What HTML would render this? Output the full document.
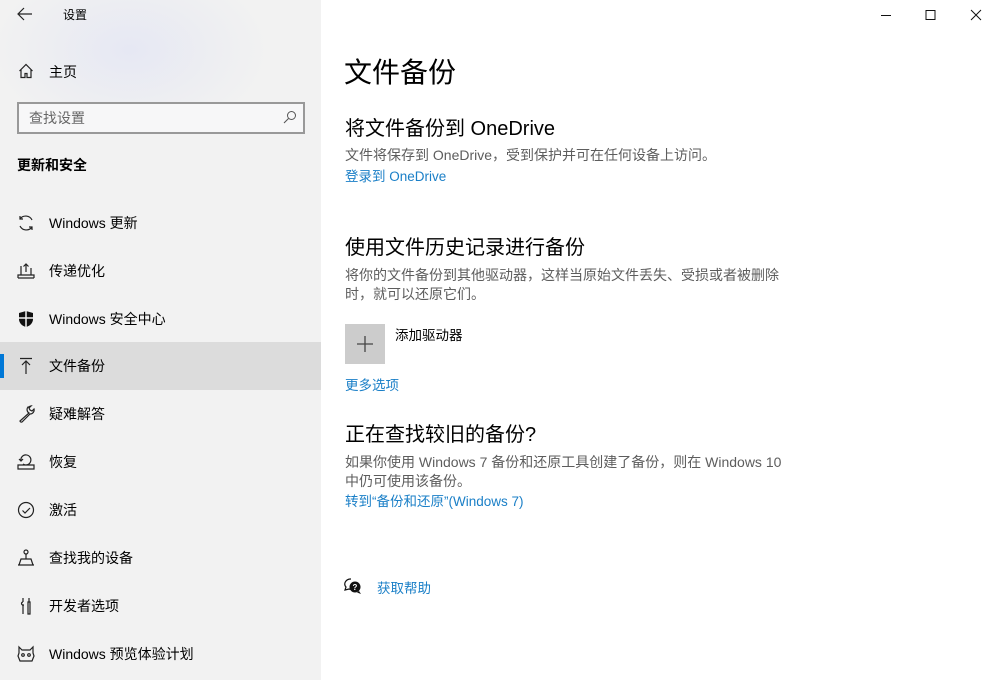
<!DOCTYPE html>
<html><head><meta charset="utf-8"><style>
*{margin:0;padding:0;box-sizing:border-box}
body{width:996px;height:680px;overflow:hidden;background:#fff;font-family:"Liberation Sans","Noto Sans CJK SC",sans-serif;color:#000;position:relative}
.side{position:absolute;left:0;top:0;width:321px;height:680px;background:radial-gradient(ellipse 140px 90px at 130px 50px,#e6e8f3,rgba(242,242,242,0) 100%),#f2f2f2}
.t{position:absolute;white-space:nowrap}
.item{position:absolute;left:0;width:321px;height:48px;font-size:14px;line-height:48px}
.item .lbl{position:absolute;left:49px;top:0}
.item svg{position:absolute;left:17px;top:15px}
.sel{background:#dcdcdc}
.sel:before{content:"";position:absolute;left:0;top:12px;width:4px;height:24px;background:#0078d7}
.p{font-size:14px;color:#5d5d5d;line-height:19px}
.a{font-size:13.5px;color:#1a7fc7}
h2{font-weight:normal;font-size:20px}
</style></head><body>
<div class="side">
<svg class="t" style="left:17px;top:7px" width="16" height="14" viewBox="0 0 16 14"><path d="M15 7H2M7 1L1 7l6 6" fill="none" stroke="#222" stroke-width="1.2"/></svg>
<div class="t" style="left:63px;top:6px;font-size:12px">设置</div>
<svg class="t" style="left:18px;top:63px" width="16" height="16" viewBox="0 0 16 16"><path d="M1.5 8L8 1.5 14.5 8M3 6.5V14.5h4v-4h2v4h4V6.5" fill="none" stroke="#222" stroke-width="1.2"/></svg>
<div class="t" style="left:49px;top:62px;font-size:14px">主页</div>
<div class="t" style="left:17px;top:102px;width:288px;height:32px;border:2px solid #999;background:#f7f7f8"></div>
<div class="t" style="left:29px;top:108px;font-size:14px;color:#666">查找设置</div>
<svg class="t" style="left:283px;top:110px" width="14" height="14" viewBox="0 0 14 14"><circle cx="8.5" cy="5.5" r="4" fill="none" stroke="#555" stroke-width="1"/><path d="M5.5 8.5L1 13" stroke="#555" stroke-width="1.1"/></svg>
<div class="t" style="left:17px;top:155px;font-size:14px;font-weight:bold">更新和安全</div>

<div class="item" style="top:199px"><svg width="18" height="18" viewBox="0 0 18 18" fill="none" stroke="#222" stroke-width="1.2"><path d="M15 6A7 7 0 0 0 3 5M3 2v3h3M3 12a7 7 0 0 0 12 1M15 16v-3h-3"/></svg><span class="lbl">Windows 更新</span></div>
<div class="item" style="top:247px"><svg width="18" height="18" viewBox="0 0 18 18" fill="none" stroke="#222" stroke-width="1.2"><path d="M1 16h16M1 16V13h16v3M4 13V4M9 10V2M6.5 4.5L9 2l2.5 2.5M14 13V6"/></svg><span class="lbl">传递优化</span></div>
<div class="item" style="top:295px"><svg width="18" height="18" viewBox="0 0 18 18"><path d="M9 1L2 3v6c0 4 3 7 7 8 4-1 7-4 7-8V3z" fill="#111"/><path d="M9 1v17M2 8h14" stroke="#f2f2f2" stroke-width="1.5"/></svg><span class="lbl">Windows 安全中心</span></div>
<div class="item sel" style="top:342px"><svg width="18" height="18" viewBox="0 0 18 18" fill="none" stroke="#222" stroke-width="1.2"><path d="M3 1.5h12M9 17V4M5 8l4-4 4 4"/></svg><span class="lbl">文件备份</span></div>
<div class="item" style="top:390px"><svg width="18" height="18" viewBox="0 0 18 18" fill="none" stroke="#222" stroke-width="1.2"><path d="M11 2a4 4 0 0 0 1 6L3 16a1.4 1.4 0 0 0 2 1l8-8a4 4 0 0 0 4-5l-2 2-2-1-1-2 2-2a4 4 0 0 0-2 1z"/></svg><span class="lbl">疑难解答</span></div>
<div class="item" style="top:438px"><svg width="18" height="18" viewBox="0 0 18 18" fill="none" stroke="#222" stroke-width="1.2"><path d="M1 16h16v-4H1zM4 8a5 5 0 1 1 2 3M2 6l2 2 2-2"/></svg><span class="lbl">恢复</span></div>
<div class="item" style="top:486px"><svg width="18" height="18" viewBox="0 0 18 18" fill="none" stroke="#222" stroke-width="1.2"><circle cx="9" cy="9" r="7.5"/><path d="M5.5 9.5l2.5 2.5 5-5"/></svg><span class="lbl">激活</span></div>
<div class="item" style="top:534px"><svg width="18" height="18" viewBox="0 0 18 18" fill="none" stroke="#222" stroke-width="1.2"><circle cx="9" cy="3" r="2"/><path d="M9 5v5M1 16h16M2 16l2-6h10l2 6"/></svg><span class="lbl">查找我的设备</span></div>
<div class="item" style="top:582px"><svg width="18" height="18" viewBox="0 0 18 18" fill="none" stroke="#222" stroke-width="1.2"><path d="M6 1v4M6 5a1.5 1.5 0 0 0 0 3v9M5 8h2M12 1v4h-1v12h2V5h-1"/></svg><span class="lbl">开发者选项</span></div>
<div class="item" style="top:630px"><svg width="18" height="18" viewBox="0 0 18 18" fill="none" stroke="#222" stroke-width="1.2"><path d="M2 2l3 3h8l3-3v6l1 3-2 5H3l-2-5 1-3z"/><circle cx="6" cy="10" r="1.3"/><circle cx="12" cy="10" r="1.3"/></svg><span class="lbl">Windows 预览体验计划</span></div>
</div>

<svg class="t" style="left:876px;top:8px" width="110" height="14" viewBox="0 0 110 14" fill="none" stroke="#111" stroke-width="1"><path d="M5 7.5h10M50 2.5h9v9h-9zM95 2l10 10M105 2L95 12"/></svg>

<div class="t" style="left:344px;top:51px;font-size:28px">文件备份</div>
<h2 class="t" style="left:345px;top:112px">将文件备份到 OneDrive</h2>
<div class="t p" style="left:345px;top:146px">文件将保存到 OneDrive，受到保护并可在任何设备上访问。</div>
<div class="t a" style="left:345px;top:165px">登录到 OneDrive</div>
<h2 class="t" style="left:345px;top:231px">使用文件历史记录进行备份</h2>
<div class="t p" style="left:345px;top:266px">将你的文件备份到其他驱动器，这样当原始文件丢失、受损或者被删除<br>时，就可以还原它们。</div>
<div class="t" style="left:345px;top:324px;width:40px;height:40px;background:#cccccc"></div>
<svg class="t" style="left:355px;top:334px" width="20" height="20" viewBox="0 0 20 20"><path d="M10 2v16M2 10h16" stroke="#444" stroke-width="1.3"/></svg>
<div class="t" style="left:395px;top:324px;font-size:13.5px">添加驱动器</div>
<div class="t a" style="left:345px;top:374px">更多选项</div>
<h2 class="t" style="left:345px;top:418px">正在查找较旧的备份?</h2>
<div class="t p" style="left:345px;top:453px">如果你使用 Windows 7 备份和还原工具创建了备份，则在 Windows 10<br>中仍可使用该备份。</div>
<div class="t a" style="left:345px;top:490px">转到“备份和还原”(Windows 7)</div>
<svg class="t" style="left:344px;top:578px" width="18" height="17" viewBox="0 0 18 17"><path d="M7 1a6 5 0 0 0-5 8L1 12l4-1a6 5 0 0 0 2 .3" fill="none" stroke="#111" stroke-width="1.2"/><circle cx="11" cy="9" r="5.5" fill="#111"/><path d="M15 13l2 3-4-1.5z" fill="#111"/><text x="11" y="12" font-size="8" font-weight="bold" fill="#fff" text-anchor="middle" font-family="Liberation Sans">?</text></svg>
<div class="t a" style="left:377px;top:577px">获取帮助</div>
</body></html>
